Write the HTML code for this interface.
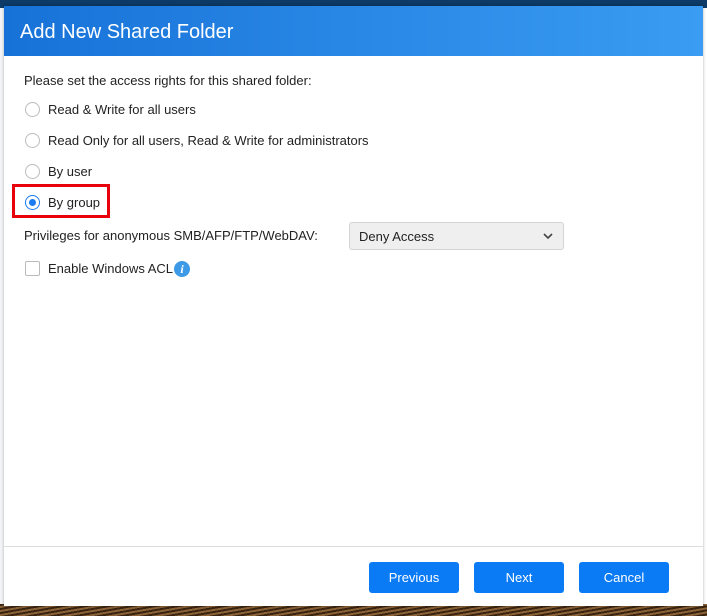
<!DOCTYPE html>
<html><head><meta charset="utf-8"><style>
*{box-sizing:border-box;margin:0;padding:0}
body{width:707px;height:616px;overflow:hidden;position:relative;background:#f4f5f7;font-family:"Liberation Sans",sans-serif;font-size:13px;color:#222}
.top{position:absolute;left:0;top:0;width:707px;height:8px;background:#0d3a66}
.bot{position:absolute;left:0;top:604px;width:707px;height:12px;background:repeating-linear-gradient(170deg,#3a2410 0 2px,#8a6238 2px 4px)}
.right{position:absolute;left:703px;top:8px;width:4px;height:596px;background:#fff}
.dlg{position:absolute;left:4px;top:6px;width:699px;height:600px;background:#fff;box-shadow:0 0 3px rgba(0,0,0,.3)}
.hdr{height:50px;background:linear-gradient(90deg,#1772d8,#3a9cf2);color:#fff;font-size:20px;padding:15px 0 0 16px}
.t{position:absolute;left:44px}
.r{position:absolute;left:21px;width:15px;height:15px;border:1px solid #bbb;border-radius:50%;background:#fff}
.sel{border:1.5px solid #1a7cf0}
.sel:after{content:"";position:absolute;left:3px;top:3px;width:7px;height:7px;border-radius:50%;background:#1a7cf0}
.btn{position:absolute;top:556px;width:90px;height:31px;background:#0a7af5;border-radius:3px;color:#fff;font-size:13px;text-align:center;line-height:31px}
</style></head><body>
<div class="top"></div><div class="bot"></div><div class="right"></div>
<div class="dlg">
<div class="hdr">Add New Shared Folder</div>
<div class="t" style="left:20px;top:67px">Please set the access rights for this shared folder:</div>
<div class="r" style="top:96px"></div><div class="t" style="top:96px">Read &amp; Write for all users</div>
<div class="r" style="top:127px"></div><div class="t" style="top:127px">Read Only for all users, Read &amp; Write for administrators</div>
<div class="r" style="top:158px"></div><div class="t" style="top:158px">By user</div>
<div style="position:absolute;left:8px;top:178px;width:98px;height:34px;border:3px solid #e8000b"></div>
<div class="r sel" style="top:189px"></div><div class="t" style="top:189px">By group</div>
<div class="t" style="left:20px;top:222px">Privileges for anonymous SMB/AFP/FTP/WebDAV:</div>
<div style="position:absolute;left:345px;top:216px;width:215px;height:28px;background:#efefef;border:1px solid #d4d4d4;border-radius:3px;padding:6px 0 0 9px">Deny Access
<svg style="position:absolute;right:10px;top:10px" width="10" height="7" viewBox="0 0 10 7"><path d="M1 1l4 4 4-4" stroke="#444" stroke-width="1.6" fill="none"/></svg></div>
<div style="position:absolute;left:21px;top:255px;width:15px;height:15px;border:1px solid #bbb;border-radius:2px"></div>
<div class="t" style="top:255px">Enable Windows ACL</div>
<div style="position:absolute;left:170px;top:255px;width:16px;height:16px;border-radius:50%;background:#3d9ae6;color:#fff;font:italic bold 12px 'Liberation Serif',serif;text-align:center;line-height:16px">i</div>
<div style="position:absolute;left:0;top:540px;width:699px;height:1px;background:#ddd"></div>
<div class="btn" style="left:365px">Previous</div>
<div class="btn" style="left:470px">Next</div>
<div class="btn" style="left:575px">Cancel</div>
</div>
</body></html>
